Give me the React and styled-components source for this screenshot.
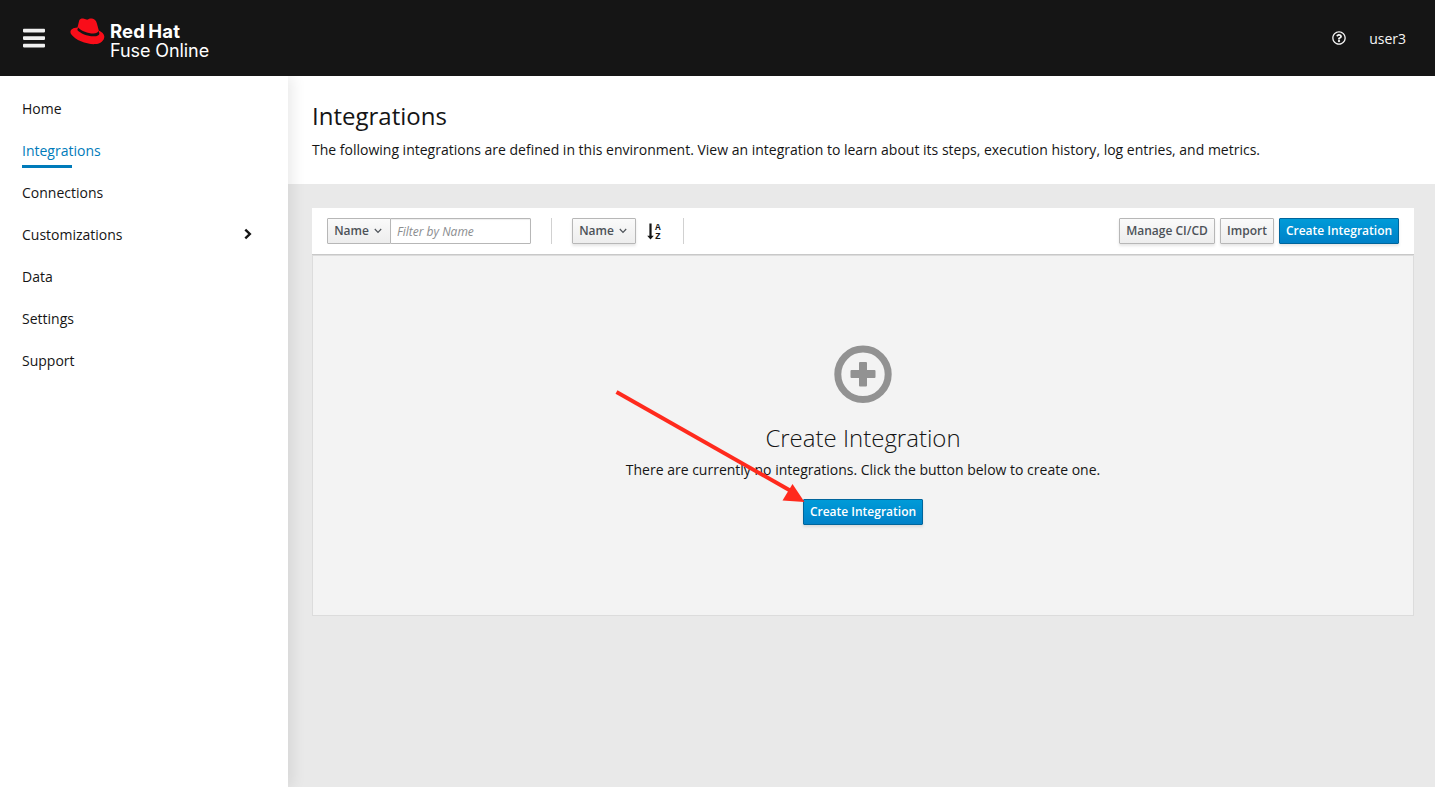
import React from "react";
import styled, { createGlobalStyle, css } from "styled-components";
import { FaRegQuestionCircle } from "react-icons/fa";

const GlobalStyle = createGlobalStyle`
  *, *::before, *::after { box-sizing: border-box; }
  body {
    margin: 0;
    background: #e9e9e9;
    color: #151515;
    font-family: "Open Sans", "Noto Sans", sans-serif;
    font-size: 14px;
    line-height: 21px;
  }
  h1, h2, p, ul { margin: 0; padding: 0; }
  button, input { font-family: inherit; margin: 0; }
  svg { display: block; }
`;

const Page = styled.div`
  display: grid;
  grid-template: 76px 1fr / 288px 1fr;
  height: 100vh;
  overflow: hidden;
`;

const Masthead = styled.header`
  grid-column: 1 / -1;
  display: flex;
  align-items: center;
  background: #151515;
  color: #f5f5f5;
  padding: 0 29px 0 23px;
  z-index: 3;
`;

const MenuToggle = styled.button`
  display: flex;
  padding: 0;
  border: 0;
  background: none;
  margin-right: 25px;
`;

const Brand = styled.a`
  display: flex;
  align-items: flex-start;
  height: 44px;
  color: #fff;
`;

const HatIcon = styled.svg`
  margin-top: 2px;
`;

const BrandText = styled.span`
  display: flex;
  flex-direction: column;
  padding-top: 6px;
  margin-left: 5px;
  font-family: Inter, sans-serif;
  font-size: 18px;
  line-height: 19px;
  white-space: nowrap;
`;

const BrandName = styled.strong`
  font-size: 18.5px;
  font-weight: 700;
  letter-spacing: 0.2px;
  word-spacing: -1.5px;
`;

const BrandProduct = styled.span`
  letter-spacing: -0.08px;
`;

const HeaderTools = styled.div`
  display: flex;
  align-items: center;
  gap: 23px;
  margin-left: auto;
  line-height: 20px;
`;

const UserName = styled.span`
  padding-top: 1px;
`;

const Sidebar = styled.nav`
  background: #fff;
  padding-top: 11px;
  box-shadow: 4px 0 14px rgba(3, 3, 3, 0.09);
  z-index: 2;
`;

const NavList = styled.ul`
  list-style: none;
`;

const NavItem = styled.li`
  display: flex;
  align-items: center;
  justify-content: space-between;
  height: 42px;
  padding: 0 36px 0 22px;
  color: ${(p) => (p.$current ? "#007bba" : "#151515")};
  ${(p) =>
    p.$current &&
    css`
      position: relative;
      &::after {
        content: "";
        position: absolute;
        left: 22px;
        bottom: 3px;
        width: 50px;
        height: 3px;
        background: #007bba;
      }
    `}
`;

const Main = styled.main`
  display: flex;
  flex-direction: column;
  min-width: 0;
`;

const PageHeader = styled.section`
  height: 108px;
  padding: 22px 24px 0;
  background: #fff;
`;

const PageTitle = styled.h1`
  font-size: 24px;
  line-height: 36px;
  font-weight: 400;
`;

const PageIntro = styled.p`
  margin-top: 5px;
  line-height: 21px;
  white-space: nowrap;
`;

const Content = styled.section`
  padding: 24px 21px 0 24px;
`;

const Toolbar = styled.div`
  display: flex;
  align-items: center;
  height: 47px;
  padding: 0 15px;
  background: #fff;
  border-bottom: 1px solid #c8c8c8;
`;

const Button = styled.button`
  display: flex;
  align-items: center;
  justify-content: center;
  flex: none;
  width: ${(p) => p.$width}px;
  height: 26px;
  padding: 0 0 1px;
  border: 1px solid #b7b7b7;
  border-radius: 1px;
  background: linear-gradient(#fafafa, #ededed);
  color: #4d5258;
  font-size: 12px;
  font-weight: 600;
  line-height: 20px;
  white-space: nowrap;
  box-shadow: ${(p) => (p.$flat ? "none" : "0 2px 3px rgba(3, 3, 3, 0.1)")};
  ${(p) =>
    p.$primary &&
    css`
      border-color: #00659c;
      background: linear-gradient(#009bd8, #0081c8);
      color: #fff;
    `}
`;

const CaretIcon = styled.svg`
  margin: 1px 2px 0 5px;
`;

const FilterInput = styled.input`
  width: 141px;
  height: 26px;
  margin-left: -1px;
  padding: 0 6px;
  border: 1px solid #b7b7b7;
  border-radius: 1px;
  font-size: 12px;
  box-shadow: inset 0 1px 1px rgba(3, 3, 3, 0.07);
  &::placeholder { color: #8b8d8f; font-style: italic; opacity: 1; }
`;

const Separator = styled.span`
  width: 1px;
  height: 26px;
  background: #d1d1d1;
  margin: 0 20px;
`;

const SortButton = styled.span`
  display: flex;
  align-items: center;
  gap: 1px;
  width: 16px;
  margin-left: 11px;
`;

const SortLetters = styled.span`
  display: flex;
  flex-direction: column;
  align-items: center;
  padding-top: 1px;
  font: 700 9.5px/9px "Liberation Mono", monospace;
`;

const Actions = styled.div`
  display: flex;
  gap: 5px;
  margin-left: auto;
`;

const EmptyState = styled.div`
  position: relative;
  display: flex;
  flex-direction: column;
  align-items: center;
  height: 361px;
  padding-top: 89px;
  background: #f3f3f3;
  border: 1px solid #dcdcdc;
`;

const EmptyTitle = styled.h2`
  margin-top: 21px;
  font-size: 24px;
  line-height: 28px;
  font-weight: 300;
`;

const EmptyText = styled.p`
  margin: 7px 0 19px;
  line-height: 21px;
`;

const PointerArrow = styled.svg`
  position: absolute;
  left: 299px;
  top: 130px;
  pointer-events: none;
`;

const Caret = () => (
  <CaretIcon width="8" height="6" viewBox="0 0 8 6" fill="none" stroke="currentColor" strokeWidth="1.2">
    <path d="M0.8 1 4 4.3 7.2 1" />
  </CaretIcon>
);

const Hat = () => (
  <HatIcon width="35" height="28" viewBox="0 0 35 28">
    <path
      fill="#f90d19"
      d="M9.2 2.5C10.2.7 12 .2 14 .8l2.600.8c.8.2 1.300-.4 2.200-.7 2.200-.7 4.400-.2 6.200 1.100 1 .8 1.500 2 1.900 3.400l1.900 7c3.100 1.500 5.400 3.400 5.500 6 .2 3.700-3.500 7.400-9.300 7.700C16.500 26.500 5.500 22.300 1.200 16.300-1 12.700 1.800 9.800 7.500 9.500Z"
    />
    <path
      fill="#151515"
      d="M8.1 9.5 7.300 12C10 15.400 18 18.500 24 18.300c3.100-.1 5.500-1 5.400-2.900l-.8-2.600c-.6 2-2.600 2.600-5.100 2.700C18 15.600 11.500 13 8.100 9.500Z"
    />
  </HatIcon>
);

const navItems = ["Home", "Integrations", "Connections", "Customizations", "Data", "Settings", "Support"];

export default function App() {
  return (
    <>
      <GlobalStyle />
      <Page>
        <Masthead>
          <MenuToggle aria-label="Toggle navigation">
            <svg width="22" height="20" viewBox="0 0 22 20" fill="#f0f0f0">
              <rect y="0.7" width="22" height="3.7" rx="0.8" />
              <rect y="8.2" width="22" height="3.7" rx="0.8" />
              <rect y="15.7" width="22" height="3.7" rx="0.8" />
            </svg>
          </MenuToggle>
          <Brand>
            <Hat />
            <BrandText>
              <BrandName>Red Hat</BrandName>
              <BrandProduct>Fuse Online</BrandProduct>
            </BrandText>
          </Brand>
          <HeaderTools>
            <FaRegQuestionCircle size={14} />
            <UserName>user3</UserName>
          </HeaderTools>
        </Masthead>
        <Sidebar>
          <NavList>
            {navItems.map((label) => (
              <NavItem key={label} $current={label === "Integrations"}>
                {label}
                {label === "Customizations" && (
                  <svg width="8" height="12" viewBox="0 0 8 12" fill="none" stroke="currentColor" strokeWidth="2.4">
                    <path d="M1.3 1.7 5.8 6 1.3 10.3" />
                  </svg>
                )}
              </NavItem>
            ))}
          </NavList>
        </Sidebar>
        <Main>
          <PageHeader>
            <PageTitle>Integrations</PageTitle>
            <PageIntro>
              The following integrations are defined in this environment. View an integration to learn about its
              steps, execution history, log entries, and metrics.
            </PageIntro>
          </PageHeader>
          <Content>
            <Toolbar>
              <Button $width={64} $flat>Name<Caret /></Button>
              <FilterInput placeholder="Filter by Name" />
              <Separator />
              <Button $width={64}>Name<Caret /></Button>
              <SortButton>
                <svg width="7" height="17" viewBox="0 0 7 17" fill="#151515">
                  <path d="M2.4.5h2.200v12.200h2.200L3.500 16.500.2 12.700h2.200z" />
                </svg>
                <SortLetters><span>A</span><span>Z</span></SortLetters>
              </SortButton>
              <Separator />
              <Actions>
                <Button $width={96}>Manage CI/CD</Button>
                <Button $width={54}>Import</Button>
                <Button $width={120} $primary>Create Integration</Button>
              </Actions>
            </Toolbar>
            <EmptyState>
              <svg width="58" height="58" viewBox="0 0 58 58">
                <circle cx="29" cy="29.3" r="25.2" fill="none" stroke="#929292" strokeWidth="7" />
                <path
                  fill="#929292"
                  d="M26 17h6q1 0 1 1v7h7.500q1 0 1 1v6q0 1-1 1H33v7.500q0 1-1 1h-6q-1 0-1-1V33h-7.500q-1 0-1-1v-6q0-1 1-1H25v-7q0-1 1-1Z"
                />
              </svg>
              <EmptyTitle>Create Integration</EmptyTitle>
              <EmptyText>There are currently no integrations. Click the button below to create one.</EmptyText>
              <Button $width={120} $primary>Create Integration</Button>
              <PointerArrow width="196" height="120" viewBox="0 0 196 120">
                <path d="M4.500 6 179 105" stroke="#ff2a1d" strokeWidth="4" />
                <path d="M180.500 98 192.500 116 170.500 114.500Z" fill="#ff2a1d" />
              </PointerArrow>
            </EmptyState>
          </Content>
        </Main>
      </Page>
    </>
  );
}
